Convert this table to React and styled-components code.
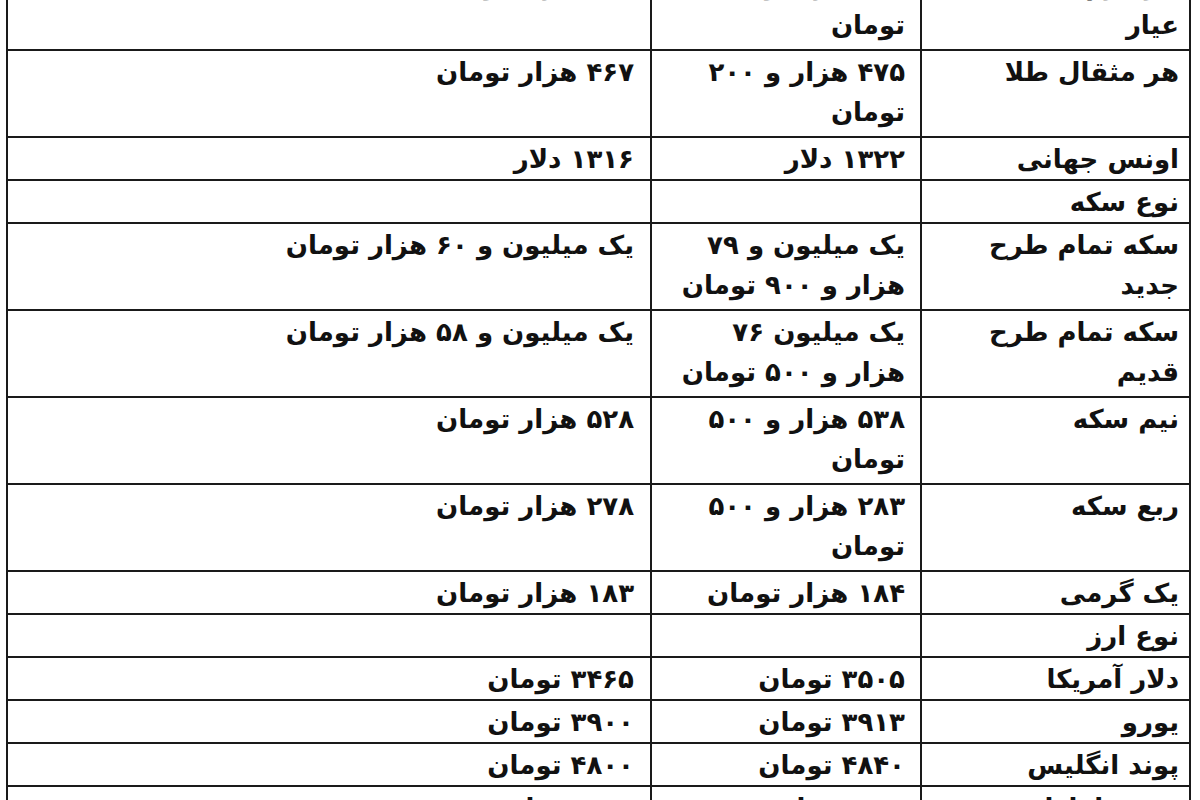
import React from "react";
import styled, { createGlobalStyle } from "styled-components";

const GlobalStyle = createGlobalStyle`
  html, body {
    margin: 0;
    padding: 0;
    background: #fff;
  }
`;

const Page = styled.div`
  width: 1200px;
  height: 800px;
  overflow: hidden;
  padding-left: 6px;
  box-sizing: border-box;
`;

const Table = styled.table`
  direction: rtl;
  border-collapse: collapse;
  table-layout: fixed;
  width: 1185px;
  margin-top: -38px;
  font-family: "DejaVu Sans", "Noto Sans", sans-serif;
  font-weight: 700;
  font-size: 26px;
  color: #111;
`;

const Col = styled.col`
  width: ${(p) => p.$w}px;
`;

const Cell = styled.td`
  border: 2px solid #1a1a1a;
  height: ${(p) => (p.$double ? 84 : 38)}px;
  padding: 1px ${(p) => p.$pad}px 0 8px;
  vertical-align: top;
  text-align: right;
  line-height: 40px;
  white-space: nowrap;
  overflow: hidden;
`;

const rows = [
  { label: ["هر گرم طلای ۱۸", "عیار"], now: ["۱۰۹ هزار و ۶۰۰", "تومان"], before: ["۱۰۸ هزار تومان"], double: true },
  { label: ["هر مثقال طلا"], now: ["۴۷۵ هزار و ۲۰۰", "تومان"], before: ["۴۶۷ هزار تومان"], double: true },
  { label: ["اونس جهانی"], now: ["۱۳۲۲ دلار"], before: ["۱۳۱۶ دلار"] },
  { label: ["نوع سکه"], now: [], before: [] },
  { label: ["سکه تمام طرح", "جدید"], now: ["یک میلیون و ۷۹", "هزار و ۹۰۰ تومان"], before: ["یک میلیون و ۶۰ هزار تومان"], double: true },
  { label: ["سکه تمام طرح", "قدیم"], now: ["یک میلیون  ۷۶", "هزار و ۵۰۰ تومان"], before: ["یک میلیون و ۵۸ هزار تومان"], double: true },
  { label: ["نیم سکه"], now: ["۵۳۸ هزار و ۵۰۰", "تومان"], before: ["۵۲۸ هزار تومان"], double: true },
  { label: ["ربع سکه"], now: ["۲۸۳ هزار و ۵۰۰", "تومان"], before: ["۲۷۸ هزار تومان"], double: true },
  { label: ["یک گرمی"], now: ["۱۸۴ هزار تومان"], before: ["۱۸۳ هزار تومان"] },
  { label: ["نوع ارز"], now: [], before: [] },
  { label: ["دلار آمریکا"], now: ["۳۵۰۵ تومان"], before: ["۳۴۶۵ تومان"] },
  { label: ["یورو"], now: ["۳۹۱۳ تومان"], before: ["۳۹۰۰ تومان"] },
  { label: ["پوند انگلیس"], now: ["۴۸۴۰ تومان"], before: ["۴۸۰۰ تومان"] },
  { label: ["درهم امارات"], now: ["۹۵۵ تومان"], before: ["۹۴۵ تومان"] },
];

const Lines = ({ items }) =>
  items.map((t, i) => (
    <React.Fragment key={i}>
      {i > 0 && <br />}
      {t}
    </React.Fragment>
  ));

export default function App() {
  return (
    <Page>
      <GlobalStyle />
      <Table>
        <colgroup>
          <Col $w={269} />
          <Col $w={270} />
          <Col $w={644} />
        </colgroup>
        <tbody>
          {rows.map((r, i) => (
            <tr key={i}>
              <Cell $double={r.double} $pad={10}>
                <Lines items={r.label} />
              </Cell>
              <Cell $double={r.double} $pad={15}>
                <Lines items={r.now} />
              </Cell>
              <Cell $double={r.double} $pad={16}>
                <Lines items={r.before} />
              </Cell>
            </tr>
          ))}
        </tbody>
      </Table>
    </Page>
  );
}
